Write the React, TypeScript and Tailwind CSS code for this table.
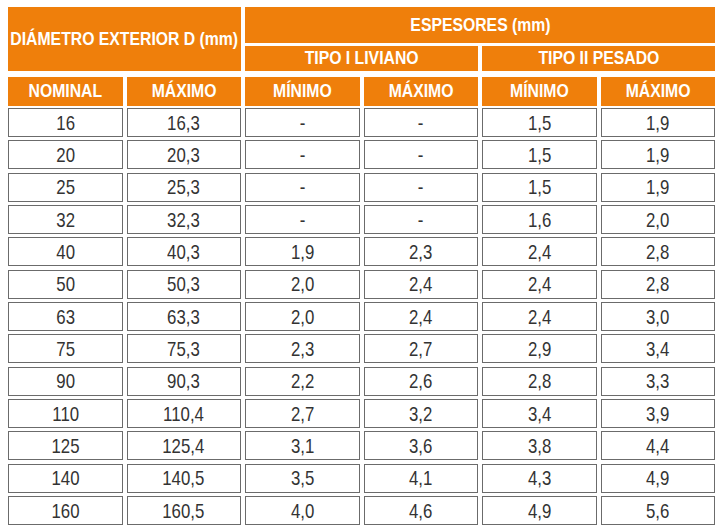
const rows: string[][] = [
  ["16", "16,3", "-", "-", "1,5", "1,9"],
  ["20", "20,3", "-", "-", "1,5", "1,9"],
  ["25", "25,3", "-", "-", "1,5", "1,9"],
  ["32", "32,3", "-", "-", "1,6", "2,0"],
  ["40", "40,3", "1,9", "2,3", "2,4", "2,8"],
  ["50", "50,3", "2,0", "2,4", "2,4", "2,8"],
  ["63", "63,3", "2,0", "2,4", "2,4", "3,0"],
  ["75", "75,3", "2,3", "2,7", "2,9", "3,4"],
  ["90", "90,3", "2,2", "2,6", "2,8", "3,3"],
  ["110", "110,4", "2,7", "3,2", "3,4", "3,9"],
  ["125", "125,4", "3,1", "3,6", "3,8", "4,4"],
  ["140", "140,5", "3,5", "4,1", "4,3", "4,9"],
  ["160", "160,5", "4,0", "4,6", "4,9", "5,6"],
];

const subHeads = ["NOMINAL", "MÁXIMO", "MÍNIMO", "MÁXIMO", "MÍNIMO", "MÁXIMO"];

const orange = "bg-[#ef7f0b] text-white font-bold flex items-center justify-center text-[19px]";

// narrow look: Arial Narrow isn't available, squeeze Liberation Sans instead
function Narrow({ children }: { children: React.ReactNode }) {
  return <span className="inline-block whitespace-nowrap scale-x-[0.8]">{children}</span>;
}

function HeadText({ children }: { children: React.ReactNode }) {
  return <span className="inline-block whitespace-nowrap scale-x-[0.83]">{children}</span>;
}

export default function App() {
  return (
    <div className="w-[720px] h-[530px] bg-white pl-[8px] pt-[7px] font-['Liberation_Sans',Arial,sans-serif]">
      <div className="w-[707px] flex flex-col">
        <div className="grid grid-cols-6 grid-rows-[36px_25px] gap-x-[4px] gap-y-[3px]">
          <div className={`${orange} col-span-2 row-span-2`}><HeadText>DIÁMETRO EXTERIOR D (mm)</HeadText></div>
          <div className={`${orange} col-span-4`}><HeadText>ESPESORES (mm)</HeadText></div>
          <div className={`${orange} col-span-2`}><HeadText>TIPO I LIVIANO</HeadText></div>
          <div className={`${orange} col-span-2`}><HeadText>TIPO II PESADO</HeadText></div>
        </div>

        <div className="grid grid-cols-6 gap-x-[4px] mt-[6px] h-[25px]">
          {subHeads.map((h, i) => (
            <div key={i} className={orange}><HeadText>{h}</HeadText></div>
          ))}
        </div>

        <div className="grid grid-cols-6 auto-rows-[29px] gap-x-[4px] gap-y-[3.33px] mt-[6px]">
          {rows.map((r, ri) =>
            r.map((v, ci) => (
              <div
                key={`${ri}-${ci}`}
                className="border border-[#6b6b6b] bg-white text-[#333] text-[21px] flex items-center justify-center"
              >
                <Narrow>{v}</Narrow>
              </div>
            ))
          )}
        </div>
      </div>
    </div>
  );
}
